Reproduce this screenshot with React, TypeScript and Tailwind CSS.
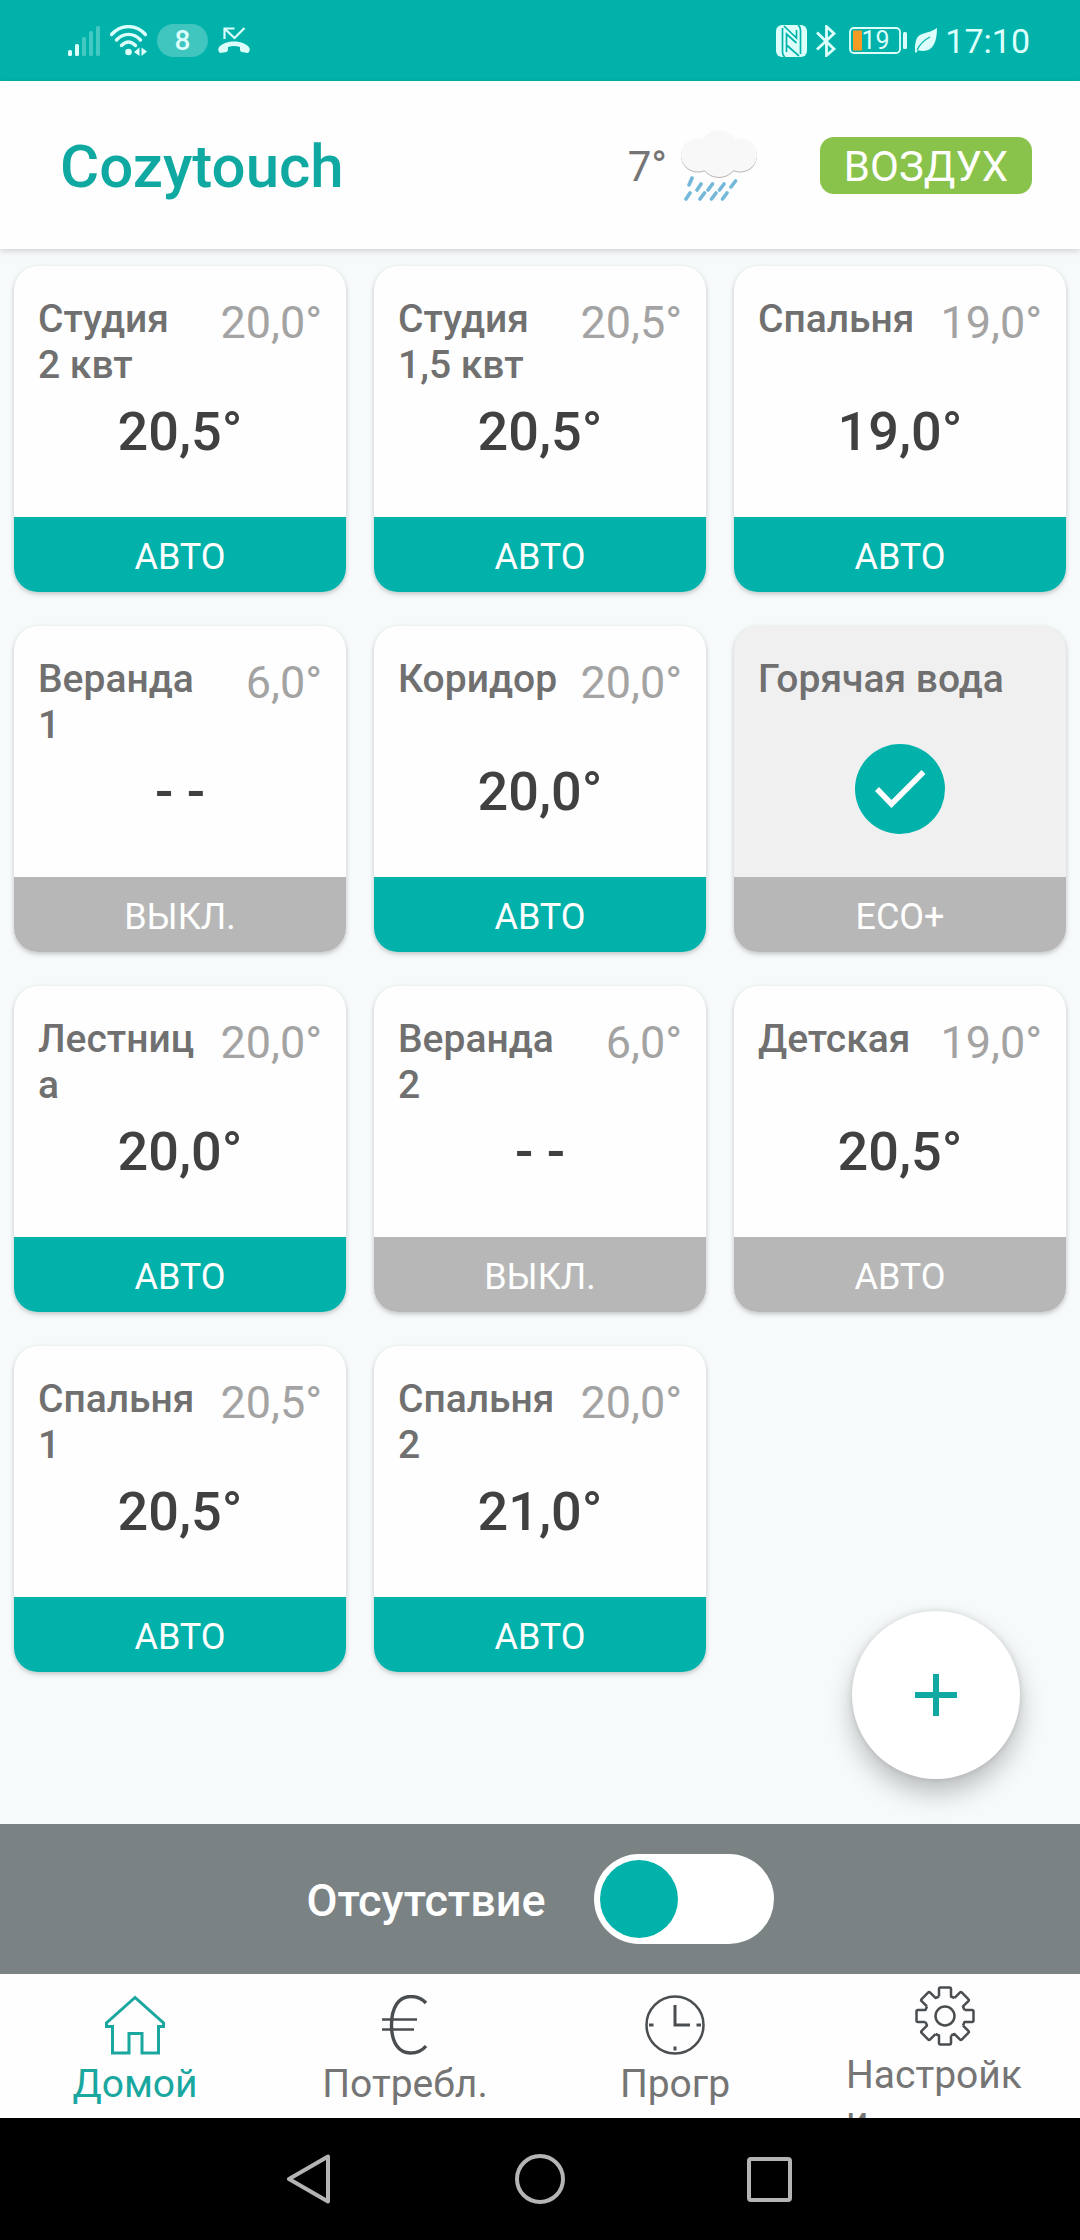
import React, { useState } from 'react';
import clsx from 'clsx';

interface Zone {
  name: string;
  measured?: string;
  target?: string;
  mode: string;
  active: boolean;
  hotWater?: boolean;
}

const zones: Zone[] = [
  { name: 'Студия 2 квт', measured: '20,0°', target: '20,5°', mode: 'АВТО', active: true },
  { name: 'Студия 1,5 квт', measured: '20,5°', target: '20,5°', mode: 'АВТО', active: true },
  { name: 'Спальня', measured: '19,0°', target: '19,0°', mode: 'АВТО', active: true },
  { name: 'Веранда 1', measured: '6,0°', target: '- -', mode: 'ВЫКЛ.', active: false },
  { name: 'Коридор', measured: '20,0°', target: '20,0°', mode: 'АВТО', active: true },
  { name: 'Горячая вода', mode: 'ECO+', active: false, hotWater: true },
  { name: 'Лестница', measured: '20,0°', target: '20,0°', mode: 'АВТО', active: true },
  { name: 'Веранда 2', measured: '6,0°', target: '- -', mode: 'ВЫКЛ.', active: false },
  { name: 'Детская', measured: '19,0°', target: '20,5°', mode: 'АВТО', active: false },
  { name: 'Спальня 1', measured: '20,5°', target: '20,5°', mode: 'АВТО', active: true },
  { name: 'Спальня 2', measured: '20,0°', target: '21,0°', mode: 'АВТО', active: true },
];

const StatusBar: React.FC = () => (
  <div className="flex h-[81px] shrink-0 items-center justify-between bg-[#00b2aa] pr-[50px] pl-[68px] text-[#dcfffc]">
    <div className="flex items-center gap-[10px]">
      <svg width="32" height="30" viewBox="0 0 32 30" fill="currentColor">
        <rect x="0" y="24" width="4" height="6" rx="1.5" />
        <rect x="7" y="18" width="4" height="12" rx="1.5" />
        <g opacity="0.3">
          <rect x="14" y="11" width="4" height="19" rx="1.5" />
          <rect x="21" y="5" width="4" height="25" rx="1.5" />
          <rect x="28" y="0" width="4" height="30" rx="1.5" />
        </g>
      </svg>
      <svg width="37" height="31" viewBox="0 0 37 31" fill="none" stroke="currentColor" strokeWidth="3.4">
        <path d="M1.5 9.5C11 -1 26 -1 35.5 9.5" strokeLinecap="round" />
        <path d="M6.5 15C13.5 7.5 23.5 7.5 30.5 15" strokeLinecap="round" />
        <path d="M11.5 20.5C16 16 21 16 25.5 20.5" strokeLinecap="round" />
        <circle cx="18.5" cy="27" r="3.3" fill="currentColor" stroke="none" />
        <path d="M29.5 22.5V31L24 27ZM31.5 22.5V31L37 26.5Z" fill="currentColor" stroke="none" />
      </svg>
      <span className="flex h-[33px] w-[51px] items-center justify-center rounded-full bg-white/25 text-[28px] leading-[33px] font-medium">
        8
      </span>
      <svg width="32" height="27" viewBox="0 0 32 27" fill="none">
        <path d="M6.5 12V1.5H16.5M7 2L16.5 11L26.5 1" stroke="currentColor" strokeWidth="2.2" />
        <path
          d="M0.5 21C3 17 9 14.500 16 14.500S29 17 31.500 21C32 23 31.500 25 30 26L23.500 25C22.500 24.500 22 23.500 22 22V20C18 18.500 14 18.500 10 20V22C10 23.500 9.500 24.500 8.500 25L2 26C0.500 25 0 23 0.500 21Z"
          fill="currentColor"
        />
      </svg>
    </div>

    <div className="flex items-center gap-[8px]">
      <svg width="31" height="32" viewBox="0 0 31 32">
        <rect width="31" height="32" rx="6" fill="currentColor" />
        <path
          d="M6.5 3V27C6.5 29 7.5 31 9 32M24.5 29V5C24.5 3 23.5 1 22 0M8 1L20.5 13V5M23 31L10.5 20V27M10.5 20V9L20.5 18"
          fill="none"
          stroke="#00b2aa"
          strokeWidth="1.7"
        />
      </svg>
      <svg width="22" height="32" viewBox="0 0 22 32" fill="none" stroke="currentColor" strokeWidth="2.8">
        <path d="M2 7.5L19 24L11.5 30.5V1.5L19 8.500L2 24.5" />
      </svg>
      <svg width="58" height="27" viewBox="0 0 58 27" className="ml-[4px]">
        <rect x="1" y="1" width="50" height="25" rx="4" fill="none" stroke="currentColor" strokeWidth="1.8" />
        <rect x="4" y="3.5" width="9" height="20" fill="#f59b23" />
        <rect x="54" y="5" width="4" height="17" rx="1.5" fill="currentColor" />
        <text x="26.5" y="22" textAnchor="middle" fontSize="25" fill="currentColor">19</text>
      </svg>
      <svg width="22" height="25" viewBox="0 0 22 25">
        <path d="M22 0C22 14 18 23 8 23C5 23 3 22 3 22L1 25L0 24C0 24 -1 10 5 7C11 4 17 4 22 0Z" fill="currentColor" />
        <path d="M2 22C5 16 9 12 15 9" fill="none" stroke="#00b2aa" strokeWidth="1.3" />
      </svg>
      <span className="text-[34px] leading-[40px]">17:10</span>
    </div>
  </div>
);

const RainCloud: React.FC = () => (
  <svg width="76" height="71" viewBox="0 0 76 71">
    <g fill="#b9b3b1" transform="translate(0 1)">
      <ellipse cx="17" cy="25" rx="17" ry="16.5" />
      <ellipse cx="59" cy="25" rx="17" ry="16.5" />
      <ellipse cx="38" cy="23.5" rx="21" ry="23.5" />
    </g>
    <g fill="#f8f8f8">
      <ellipse cx="17" cy="25" rx="17" ry="16.5" />
      <ellipse cx="59" cy="25" rx="17" ry="16.5" />
      <ellipse cx="38" cy="23.5" rx="21" ry="23.5" />
    </g>
    <path
      d="M11 48L8 55M20 54L16 60M31.500 54L27 60M43 54L38.500 60M54.500 51L50 57M9 63L5 69M23.500 63L19 69M35 63L30.500 69M46 63L41.500 69"
      stroke="#74b8d9"
      strokeWidth="3.6"
      strokeLinecap="round"
    />
  </svg>
);

const Header: React.FC = () => (
  <header className="relative z-10 flex h-[168px] shrink-0 items-center justify-between bg-[#fefefe] pr-[48px] pl-[60px] shadow-[0_2px_6px_rgba(0,0,0,0.16)]">
    <h1 className="pt-[4px] text-[60px] leading-[70px] font-medium text-[#0fa9a2]">Cozytouch</h1>
    <div className="flex items-center">
      <span className="mr-[14px] pt-[2px] text-[42px] leading-[49px] text-[#757575]">7°</span>
      <RainCloud />
      <button className="ml-[63px] flex h-[57px] w-[212px] items-center justify-center rounded-[14px] bg-[#8ac34c] pt-[2px] text-[42px] leading-[49px] text-white">
        ВОЗДУХ
      </button>
    </div>
  </header>
);

const ZoneCard: React.FC<{ zone: Zone }> = ({ zone }) => (
  <article
    className={clsx(
      'flex flex-col overflow-hidden rounded-[24px] shadow-[0_2px_5px_rgba(0,0,0,0.22)]',
      zone.hotWater ? 'bg-[#f0f0f0]' : 'bg-[#fefefe]'
    )}
  >
    <div className="flex h-[251px] flex-col px-[24px] pt-[30px]">
      <div className="flex h-[88px] items-start justify-between">
        <h2
          className={clsx(
            'text-[39px] leading-[46px] font-medium wrap-anywhere text-[#707070]',
            zone.measured && 'w-[57%]'
          )}
        >
          {zone.name}
        </h2>
        {zone.measured && <span className="text-[45px] leading-[54px] text-[#a3a3a3]">{zone.measured}</span>}
      </div>
      <div className="flex h-[90px] items-center justify-center">
        {zone.hotWater ? (
          <svg width="90" height="90" viewBox="0 0 90 90">
            <circle cx="45" cy="45" r="45" fill="#00b2aa" />
            <path d="M22 45L36.5 60L68.5 28" fill="none" stroke="#fff" strokeWidth="5.5" />
          </svg>
        ) : (
          <p className="pt-[6px] text-[54px] leading-[64px] font-medium text-[#404040]">{zone.target}</p>
        )}
      </div>
    </div>
    <button
      className={clsx(
        'flex h-[75px] items-center justify-center pt-[4px] text-[36px] leading-[42px] text-white',
        zone.active ? 'bg-[#00b2aa]' : 'bg-[#b7b7b7]'
      )}
    >
      {zone.mode}
    </button>
  </article>
);

const HomeIcon = () => (
  <svg width="60" height="60" viewBox="0 0 60 60" fill="none" stroke="#1aa79f" strokeWidth="3">
    <path d="M30 2.5L1.5 28V31.5H7.5V58H24V38.5H37V58H53.5V31.5H58.5V28Z" />
  </svg>
);

const EuroIcon = () => (
  <svg width="60" height="60" viewBox="0 0 60 60" fill="none" stroke="#4a4e50" strokeWidth="3.4">
    <path d="M51 8C47 3.500 41 1.500 35.500 1.500C24 1.500 16.500 12 16.500 30S24 58 35.500 58C42 58 47 56 51 51" />
    <path d="M7 24.5H42M7 34.5H39" strokeWidth="2.5" />
  </svg>
);

const ClockIcon = () => (
  <svg width="60" height="60" viewBox="0 0 60 60" fill="none" stroke="#4a4e50" strokeWidth="2.5">
    <circle cx="30" cy="30" r="28.5" />
    <path d="M30 10V30H45" strokeWidth="3" />
    <path d="M4 30H8.5M51.5 30H56M30 51.5V55.5" strokeWidth="3" />
  </svg>
);

const GearIcon = () => (
  <svg width="60" height="60" viewBox="-30 -30 60 60" fill="none" stroke="#4a4e50" strokeWidth="2.5" strokeLinejoin="round">
    {[0, 45, 90, 135, 180, 225, 270, 315].map((angle) => (
      <path
        key={angle}
        transform={`rotate(${angle})`}
        d="M-6 -19.5V-27Q-6 -28.5 -4.5 -28.5H4.5Q6 -28.5 6 -27V-19.5L9.5 -18"
      />
    ))}
    <circle r="9.5" />
  </svg>
);

const tabs = [
  { label: 'Домой', Icon: HomeIcon, current: true },
  { label: 'Потребл.', Icon: EuroIcon },
  { label: 'Прогр', Icon: ClockIcon },
  { label: 'Настройки', Icon: GearIcon, tall: true },
];

const TabBar: React.FC = () => (
  <nav className="grid h-[144px] shrink-0 grid-cols-4 overflow-hidden bg-[#fefefe]">
    {tabs.map(({ label, Icon, current, tall }) => (
      <a
        key={label}
        href="#"
        className={clsx(
          'flex flex-col items-center px-[36px] text-[39px] leading-[46px]',
          tall ? 'pt-[12px]' : 'pt-[21px]',
          current ? 'text-[#1aa79f]' : 'text-[#757575]'
        )}
      >
        <Icon />
        {/* the longest label breaks onto a second line and runs under the bar's edge */}
        <span className={clsx('mt-[6px]', tall && 'w-full break-all')}>{label}</span>
      </a>
    ))}
  </nav>
);

const SystemNav: React.FC = () => (
  <div className="flex h-[122px] shrink-0 items-center justify-center gap-[180px] bg-black">
    <button aria-label="Назад">
      <svg width="50" height="50" viewBox="0 0 50 50" fill="none" stroke="#b4b4b4" strokeWidth="4" strokeLinejoin="round">
        <path d="M43 2.5V47.5L4 25Z" />
      </svg>
    </button>
    <button aria-label="Главный экран">
      <svg width="50" height="50" viewBox="0 0 50 50" fill="none" stroke="#b4b4b4" strokeWidth="4">
        <circle cx="25" cy="25" r="23" />
      </svg>
    </button>
    <button aria-label="Недавние">
      <svg width="50" height="50" viewBox="0 0 50 50" fill="none" stroke="#b4b4b4" strokeWidth="4">
        <rect x="4" y="5" width="41" height="41" rx="2" />
      </svg>
    </button>
  </div>
);

const App: React.FC = () => {
  const [away, setAway] = useState(false);

  return (
    <div className="flex min-h-screen flex-col bg-[#f6fafb] font-['Roboto',sans-serif]">
      <StatusBar />
      <Header />

      <main className="relative flex-1 px-[14px] pt-[17px] pb-[34px]">
        <div className="grid grid-cols-3 gap-x-[28px] gap-y-[34px]">
          {zones.map((zone) => (
            <ZoneCard key={zone.name} zone={zone} />
          ))}
        </div>
        <button
          aria-label="Добавить"
          className="absolute right-[60px] bottom-[45px] flex size-[168px] items-center justify-center rounded-full bg-white shadow-[0_14px_26px_rgba(0,0,0,0.24),0_0_6px_rgba(0,0,0,0.12)]"
        >
          <svg width="42" height="42" viewBox="0 0 42 42" stroke="#0fa9a2" strokeWidth="6">
            <path d="M21 0V42M0 21H42" />
          </svg>
        </button>
      </main>

      <div className="flex h-[150px] shrink-0 items-center justify-center gap-[48px] bg-[#7b8284]">
        <label htmlFor="away" className="pt-[4px] text-[45px] leading-[52px] font-medium text-white">
          Отсутствие
        </label>
        <input
          id="away"
          type="checkbox"
          role="switch"
          checked={away}
          onChange={(e) => setAway(e.target.checked)}
          className="h-[90px] w-[180px] appearance-none rounded-full bg-white p-[6px] before:block before:size-[78px] before:rounded-full before:bg-[#00b2aa] before:content-[''] checked:before:ml-auto"
        />
      </div>

      <TabBar />
      <SystemNav />
    </div>
  );
};

export default App;
